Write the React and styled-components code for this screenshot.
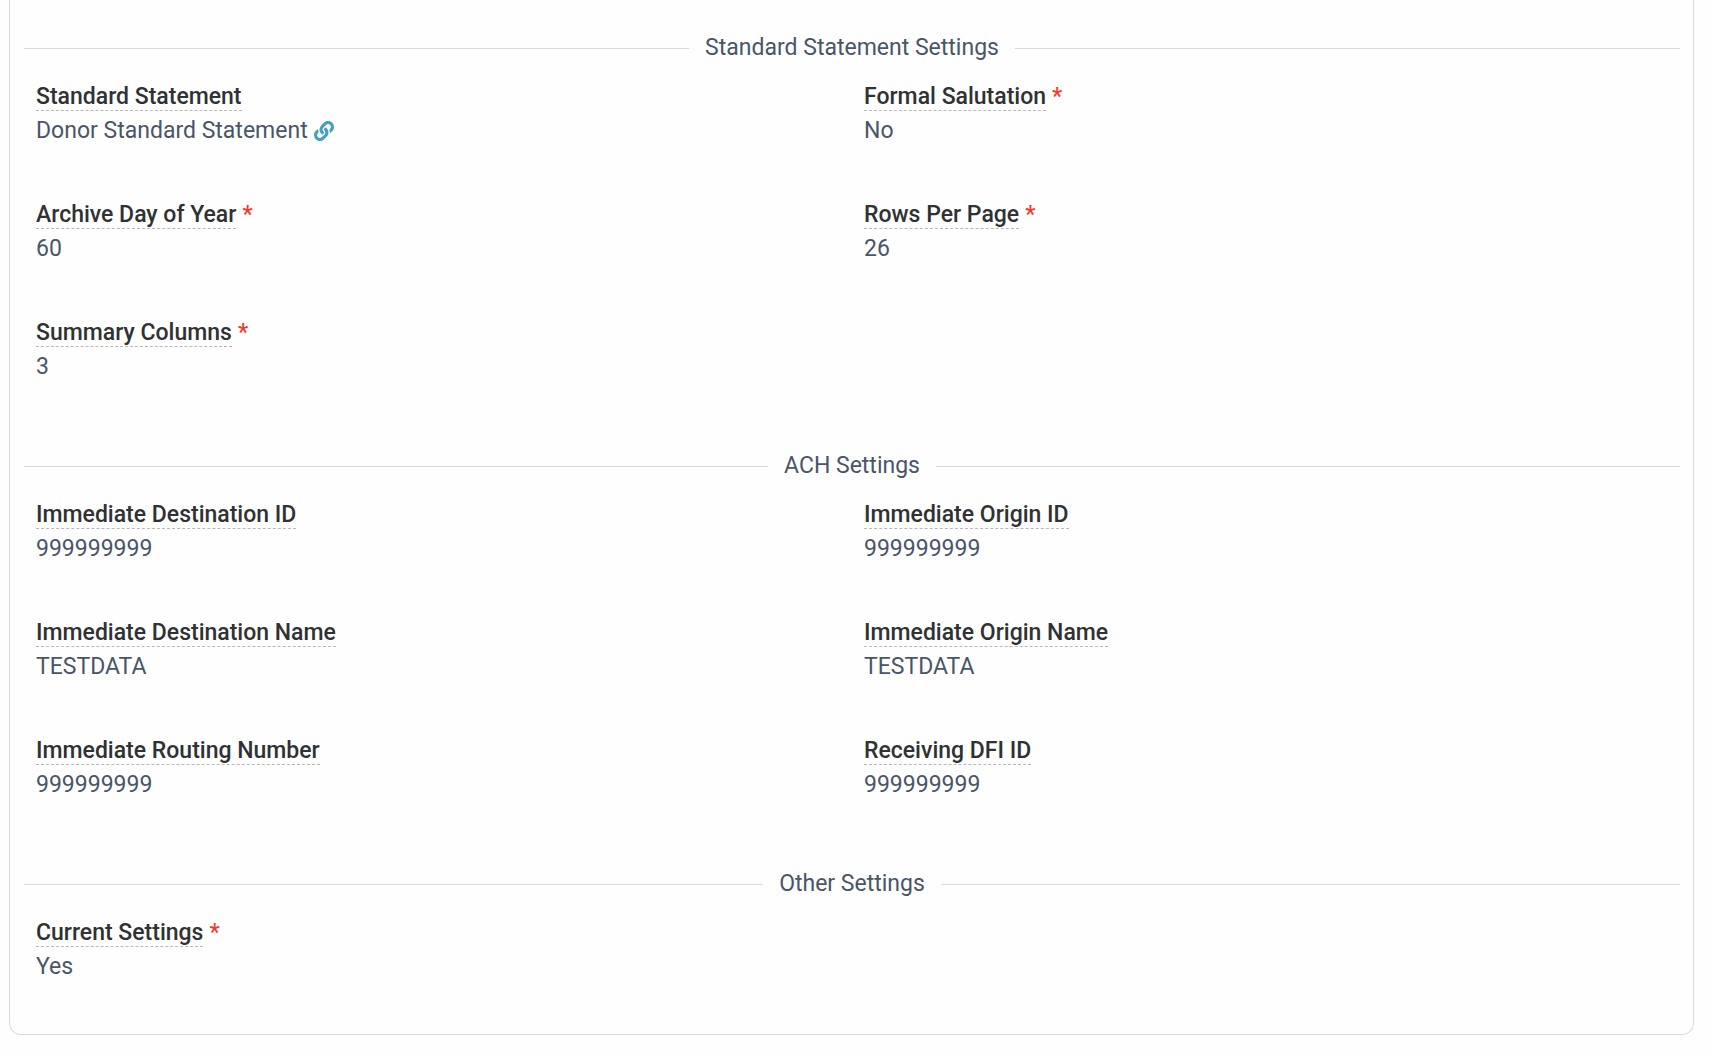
import React from 'react'
import styled, { createGlobalStyle } from 'styled-components'
import { FaLink } from 'react-icons/fa'

const sections = [
  {
    title: 'Standard Statement Settings',
    fields: [
      { label: 'Standard Statement', value: 'Donor Standard Statement', link: true },
      { label: 'Formal Salutation', value: 'No', required: true },
      { label: 'Archive Day of Year', value: '60', required: true },
      { label: 'Rows Per Page', value: '26', required: true },
      { label: 'Summary Columns', value: '3', required: true },
    ],
  },
  {
    title: 'ACH Settings',
    fields: [
      { label: 'Immediate Destination ID', value: '999999999' },
      { label: 'Immediate Origin ID', value: '999999999' },
      { label: 'Immediate Destination Name', value: 'TESTDATA' },
      { label: 'Immediate Origin Name', value: 'TESTDATA' },
      { label: 'Immediate Routing Number', value: '999999999' },
      { label: 'Receiving DFI ID', value: '999999999' },
    ],
  },
  {
    title: 'Other Settings',
    fields: [
      { label: 'Current Settings', value: 'Yes', required: true },
    ],
  },
]

const App = () => (
  <>
    <GlobalStyle />
    <Card>
      {sections.map(section => (
        <Section key={section.title}>
          <Divider>{section.title}</Divider>
          <Fields>
            {section.fields.map(field => (
              <Field key={field.label}>
                <Label>
                  <span>{field.label}</span>
                  {field.required && <Required>*</Required>}
                </Label>
                <Value>
                  {field.value}
                  {field.link && (
                    <ValueLink href="#statement" aria-label={`Open ${field.value}`}>
                      <FaLink />
                    </ValueLink>
                  )}
                </Value>
              </Field>
            ))}
          </Fields>
        </Section>
      ))}
    </Card>
  </>
)

const GlobalStyle = createGlobalStyle`
  * {
    box-sizing: border-box;
  }
  body {
    margin: 0;
    background: #fefefe;
    color: #4a5568;
    font-family: Roboto, sans-serif;
    font-size: 23px;
    line-height: 34px;
  }
`

const Card = styled.main`
  margin: 0 18px 20px 9px;
  padding: 31px 13px 0 14px;
  border: solid 1px #d9dcdc;
  border-top: none;
  border-radius: 0 0 12px 12px;
`

const Section = styled.section`
  & + & {
    margin-top: 15px;
  }
`

const Divider = styled.h2`
  display: flex;
  align-items: center;
  gap: 16px;
  margin: 0 0 15px;
  font-size: inherit;
  font-weight: 400;

  &::before,
  &::after {
    content: '';
    flex: 1;
    border-top: solid 1px #d9dada;
  }
`

const Fields = styled.dl`
  display: grid;
  grid-template-columns: 1fr 1fr;
  margin: 0;

  @media (max-width: 780px) {
    grid-template-columns: 1fr;
  }
`

const Field = styled.div`
  padding: 0 12px 50px;
`

const Label = styled.dt`
  color: #303133;
  font-weight: 500;

  span:first-child {
    border-bottom: dashed 1px #b8b8b8;
  }
`

const Required = styled.span`
  margin-left: 6px;
  color: #f5392b;
`

const Value = styled.dd`
  display: flex;
  align-items: center;
  gap: 6px;
  margin: 0;
`

const ValueLink = styled.a`
  display: flex;
  color: #459fc0;
  font-size: 20px;
`

export default App
